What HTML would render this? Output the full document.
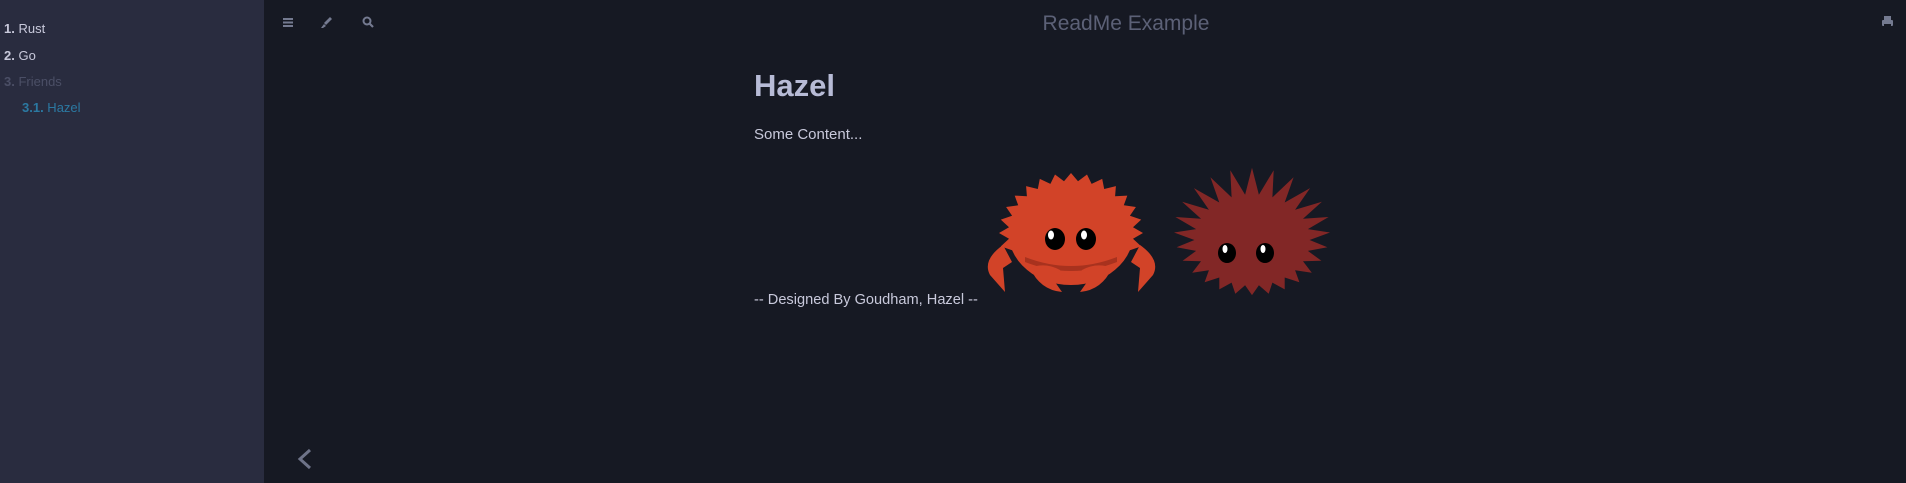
<!DOCTYPE html>
<html><head><meta charset="utf-8"><style>
*{margin:0;padding:0;box-sizing:border-box}
body{width:1906px;height:483px;background:#161923;font-family:"Liberation Sans",sans-serif;overflow:hidden;position:relative}
#side{position:absolute;left:0;top:0;width:264px;height:483px;background:#292c3f}
.it{position:absolute;left:4px;font-size:13px;color:#c8c9db}
.it b{font-weight:bold}
</style></head><body>
<div id="side">
<div class="it" style="top:21px"><b>1.</b> Rust</div>
<div class="it" style="top:48px"><b>2.</b> Go</div>
<div class="it" style="top:74px;color:#4b4f66"><b>3.</b> Friends</div>
<div class="it" style="top:100px;left:22px;color:#2b79a2"><b>3.1.</b> Hazel</div>
</div>
<svg width="1906" height="483" style="position:absolute;left:0;top:0">
<g fill="#747a90">
<rect x="283" y="18" width="10" height="2"/><rect x="283" y="21.5" width="10" height="2"/><rect x="283" y="25" width="10" height="2"/>
<path d="M330 17 L332 19 L326 25 L324 23 Z"/><path d="M324 24 L326 26 L323 28 L321 28 Z"/>
<circle cx="367" cy="21" r="3.5" fill="none" stroke="#747a90" stroke-width="2"/><path d="M369 23 L373 27" stroke="#747a90" stroke-width="2.2"/>
<rect x="1884" y="16" width="7" height="4"/><rect x="1882" y="20" width="11" height="6" rx="1"/><rect x="1884" y="24" width="7" height="3" fill="#161923"/>
</g>
<text x="1126" y="30" font-size="21" fill="#5c6177" text-anchor="middle" font-family="Liberation Sans">ReadMe Example</text>
<path d="M310 450 L300 459 L310 468" stroke="#6e7388" stroke-width="3" fill="none"/>
<text x="754" y="96" font-size="31" font-weight="bold" fill="#b7bbd6">Hazel</text>
<text x="754" y="139" font-size="15" fill="#c8c9db">Some Content...</text>
<text x="754" y="304" font-size="14.6" fill="#c8c9db">-- Designed By Goudham, Hazel --</text>
<g id="crab">
<path d="M1003 245 Q982 260 990 275 L1005 292 L1003 268 L1012 262 Z" fill="#d24328"/>
<path d="M1140 245 Q1161 260 1153 275 L1138 292 L1140 268 L1131 262 Z" fill="#d24328"/>
<polygon id="cb" fill="#d24328"/>
<path d="M1025 257 Q1071 275 1117 257 L1117 262 Q1071 280 1025 262 Z" fill="#a8321e"/>
<path d="M1030 268 Q1040 290 1062 292 L1055 282 Q1068 280 1060 270 Q1045 262 1030 268Z" fill="#d24328"/>
<path d="M1112 268 Q1102 290 1080 292 L1087 282 Q1074 280 1082 270 Q1097 262 1112 268Z" fill="#d24328"/>
<ellipse cx="1055" cy="239" rx="10" ry="11" fill="#000"/><ellipse cx="1051" cy="235" rx="3" ry="4.5" fill="#fff"/>
<ellipse cx="1086" cy="239" rx="10" ry="11" fill="#000"/><ellipse cx="1084" cy="235" rx="3" ry="4.5" fill="#fff"/>
</g>
<polygon id="ur" fill="#822726"/>
<ellipse cx="1227" cy="253" rx="9" ry="10" fill="#000"/><ellipse cx="1225" cy="249" rx="2.5" ry="4" fill="#fff"/>
<ellipse cx="1265" cy="253" rx="9" ry="10" fill="#000"/><ellipse cx="1263" cy="249" rx="2.5" ry="4" fill="#fff"/>
</svg>
<script>
function star(cx,cy,n,rin,rout,sx,sy,fn){var p=[];for(var i=0;i<2*n;i++){var a=Math.PI*i/n-Math.PI/2;var r=(i%2?rin:rout);if(fn)r=fn(a,r,i%2);p.push((cx+Math.cos(a)*r*sx).toFixed(1)+","+(cy+Math.sin(a)*r*sy).toFixed(1));}return p.join(" ");}
document.getElementById("cb").setAttribute("points",star(1071,233,28,52,60,1.2,1,function(a,r,o){var s=Math.sin(a);if(s>0.3){return o?r:52}return r;}));
document.getElementById("ur").setAttribute("points",star(1252,240,26,48,64,1.2,0.95,function(a,r,o){var s=Math.sin(a);if(o)return r;return r+(s<0?-s*12:-s*6);}));
</script>
</body></html>
